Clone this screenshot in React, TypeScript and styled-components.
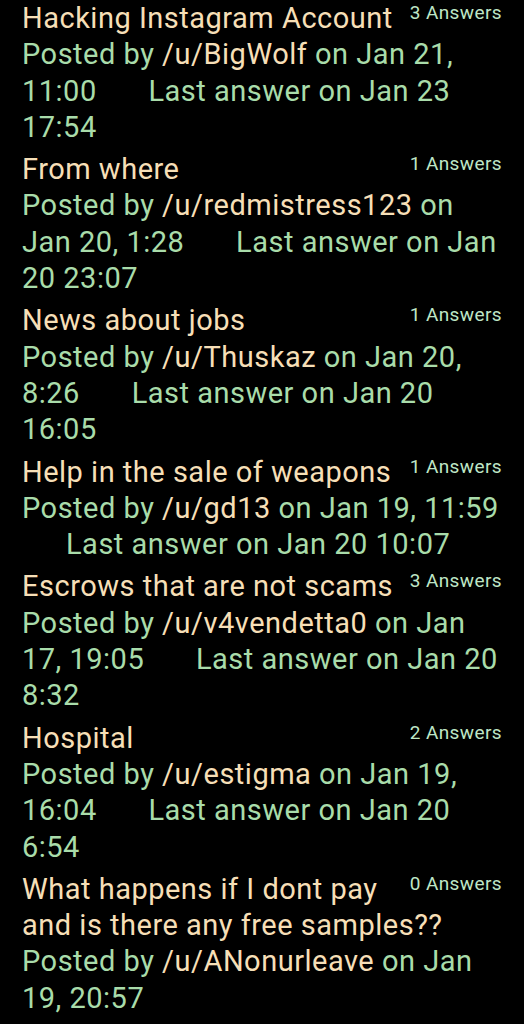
import styled, { createGlobalStyle } from 'styled-components'

const GlobalStyle = createGlobalStyle`
	html, body {
		margin: 0;
		padding: 0;
		background: #000000;
	}
	body {
		font-family: Roboto, 'Noto Sans', sans-serif;
	}
`

const List = styled.div`
	background: #000000;
	padding: 0 22px;
	min-height: 1024px;
	box-sizing: border-box;
`

const Item = styled.div`
	margin-bottom: 6px;
	font-size: 29px;
	letter-spacing: 0.5px;
	line-height: 36.3px;
`

const AnswerCount = styled.span`
	float: right;
	margin: 2px 0 0 12px;
	font-size: 19px;
	letter-spacing: 0.4px;
	line-height: 21px;
	color: #bfe6c6;
`

const Title = styled.div`
	color: #f6dfb7;
`

const Meta = styled.div`
	color: #a9dcaa;
`

const User = styled.span`
	color: #f6dfb7;
`

const LastAnswer = styled.span`
	margin-left: 44px;
`

type Post = {
	title: string
	user: string
	posted: string
	last?: string
	answers: number
}

const posts: Post[] = [
	{ title: 'Hacking Instagram Account', user: 'BigWolf', posted: 'Jan 21, 11:00', last: 'Jan 23 17:54', answers: 3 },
	{ title: 'From where', user: 'redmistress123', posted: 'Jan 20, 1:28', last: 'Jan 20 23:07', answers: 1 },
	{ title: 'News about jobs', user: 'Thuskaz', posted: 'Jan 20, 8:26', last: 'Jan 20 16:05', answers: 1 },
	{ title: 'Help in the sale of weapons', user: 'gd13', posted: 'Jan 19, 11:59', last: 'Jan 20 10:07', answers: 1 },
	{ title: 'Escrows that are not scams', user: 'v4vendetta0', posted: 'Jan 17, 19:05', last: 'Jan 20 8:32', answers: 3 },
	{ title: 'Hospital', user: 'estigma', posted: 'Jan 19, 16:04', last: 'Jan 20 6:54', answers: 2 },
	{ title: 'What happens if I dont pay and is there any free samples??', user: 'ANonurleave', posted: 'Jan 19, 20:57', answers: 0 },
]

export default function App() {
	return (
		<>
			<GlobalStyle />
			<List>
				{posts.map(post => (
					<Item key={post.title}>
						<AnswerCount>{post.answers} Answers</AnswerCount>
						<Title>{post.title}</Title>
						<Meta>
							Posted by <User>/u/{post.user}</User> on {post.posted}
							{post.last && (
								<>
									{' '}
									<LastAnswer>Last answer on {post.last}</LastAnswer>
								</>
							)}
						</Meta>
					</Item>
				))}
			</List>
		</>
	)
}
